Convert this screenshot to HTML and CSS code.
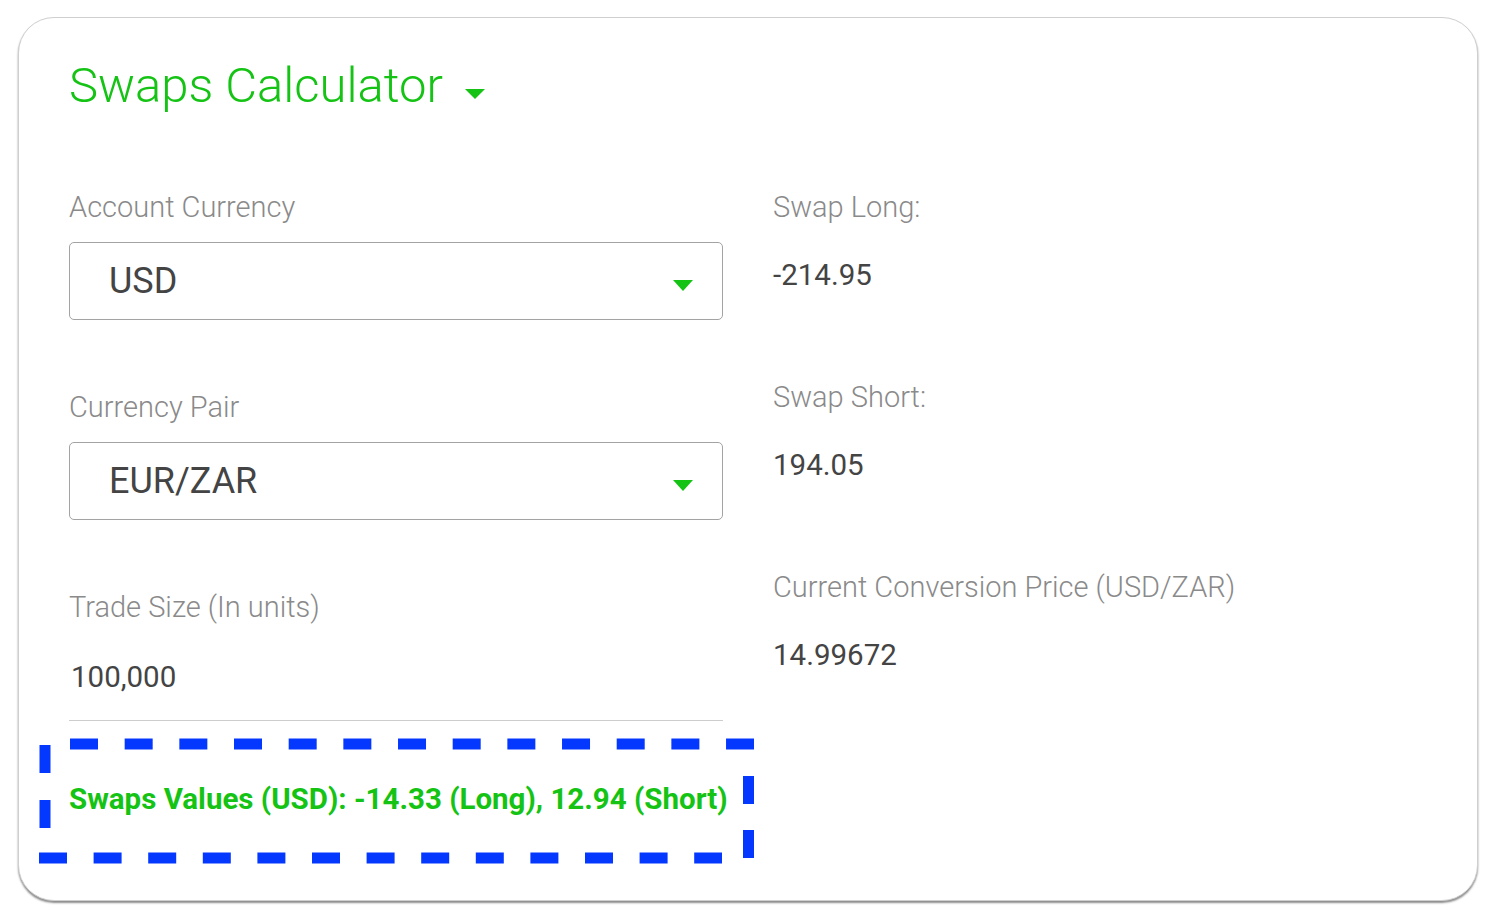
FILE: index.html
```html
<!DOCTYPE html>
<html>
<head>
<meta charset="utf-8">
<link rel="stylesheet" href="styles.css">
</head>
<body>
<div class="card">
  <h1 class="title">Swaps Calculator <span class="caret caret-title"></span></h1>
  <div class="grid">
    <div class="col left">
      <div class="field">
        <div class="label">Account Currency</div>
        <div class="select"><span class="select-text">USD</span><span class="caret caret-select"></span></div>
      </div>
      <div class="field">
        <div class="label">Currency Pair</div>
        <div class="select"><span class="select-text">EUR/ZAR</span><span class="caret caret-select"></span></div>
      </div>
      <div class="field last">
        <div class="label">Trade Size (In units)</div>
        <div class="input">100,000</div>
      </div>
      <div class="result">Swaps Values (USD): -14.33 (Long), 12.94 (Short)</div>
    </div>
    <div class="col right">
      <div class="stat">
        <div class="label">Swap Long:</div>
        <div class="value">-214.95</div>
      </div>
      <div class="stat">
        <div class="label">Swap Short:</div>
        <div class="value">194.05</div>
      </div>
      <div class="stat">
        <div class="label">Current Conversion Price (USD/ZAR)</div>
        <div class="value">14.99672</div>
      </div>
    </div>
  </div>
</div>
<svg class="annot" width="1490" height="917" viewBox="0 0 1490 917">
  <g stroke="#0538ff" stroke-width="11" fill="none">
    <line x1="70" y1="744" x2="754" y2="744" stroke-dasharray="28 26.67"/>
    <line x1="39" y1="858" x2="722" y2="858" stroke-dasharray="28 26.6"/>
    <line x1="45" y1="745" x2="45" y2="828" stroke-dasharray="28 27"/>
    <line x1="748.5" y1="776" x2="748.5" y2="858" stroke-dasharray="28 26"/>
  </g>
</svg>
</body>
</html>
```
FILE: styles.css
```css
html, body {
  margin: 0;
  padding: 0;
  background: #ffffff;
}
body {
  position: relative;
  width: 1490px;
  height: 917px;
  overflow: hidden;
  font-family: Roboto, "Liberation Sans", sans-serif;
  padding: 17px 12px 0 18px;
  box-sizing: border-box;
}
.card {
  width: 1460px;
  height: 884px;
  box-sizing: border-box;
  border: 1px solid #cfcfcf;
  border-radius: 36px;
  box-shadow: 0 2px 2px rgba(0, 0, 0, 0.45);
  padding: 38px 50px 0 50px;
  background: #fff;
}
.title {
  margin: 0;
  font-weight: 300;
  font-size: 49px;
  line-height: 60px;
  color: #14c314;
  display: flex;
  align-items: center;
}
.caret {
  display: inline-block;
  width: 0;
  height: 0;
  border-left: 10.5px solid transparent;
  border-right: 10.5px solid transparent;
  border-top: 11px solid #14c314;
}
.caret-title {
  border-left-width: 10px;
  border-right-width: 10px;
  border-top-width: 10px;
  margin-left: 22px;
  margin-top: 15px;
}
.grid {
  display: grid;
  grid-template-columns: 654px 1fr;
  column-gap: 50px;
  margin-top: 74px;
}
.label {
  font-weight: 300;
  font-size: 29px;
  line-height: 34px;
  color: #8a8a8a;
  white-space: nowrap;
}
.field {
  margin-bottom: 70px;
}
.field.last {
  margin-bottom: 0;
}
.select {
  margin-top: 18px;
  height: 78px;
  box-sizing: border-box;
  border: 1.5px solid #a3a3a3;
  border-radius: 5px;
  display: flex;
  align-items: center;
  justify-content: space-between;
  padding: 0 29px 0 39px;
}
.select-text {
  font-size: 36px;
  color: #444;
  line-height: 40px;
}
.caret-select {
  margin-top: 8px;
}
.input {
  margin-top: 35px;
  font-size: 29.5px;
  line-height: 36px;
  color: #444;
  padding: 0 0 25px 2px;
  border-bottom: 1.5px solid #cdcdcd;
}
.result {
  margin-top: 61px;
  font-weight: 700;
  font-size: 29.5px;
  line-height: 34px;
  color: #14c314;
  white-space: nowrap;
}
.stat {
  margin-bottom: 87px;
}
.value {
  margin-top: 33px;
  font-size: 29.5px;
  line-height: 36px;
  color: #444;
}
.annot {
  position: absolute;
  left: 0;
  top: 0;
  pointer-events: none;
}
```
